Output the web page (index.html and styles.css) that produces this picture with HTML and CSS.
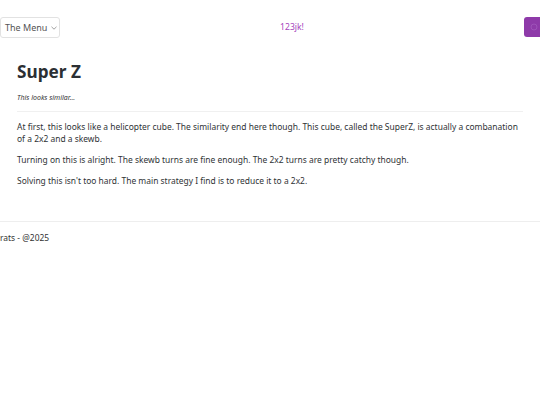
FILE: index.html
```html
<!DOCTYPE html>
<html>
<head>
<meta charset="utf-8">
<link rel="stylesheet" href="styles.css">
</head>
<body>
<header class="topbar">
  <button class="menu-btn">The Menu <svg class="chev" width="6" height="4" viewBox="0 0 6 4"><path d="M0.5 0.8 L3 3.2 L5.5 0.8" fill="none" stroke="#888" stroke-width="0.8"/></svg></button>
  <span class="brand">123jk!</span>
  <span class="user-btn"><svg width="8" height="8" viewBox="0 0 8 8"><circle cx="4" cy="4" r="3" fill="none" stroke="#9d52b8" stroke-width="1"/></svg></span>
</header>
<main class="content">
  <h1 class="title">Super Z</h1>
  <p class="subtitle">This looks similar...</p>
  <hr class="rule">
  <p class="para">At first, this looks like a helicopter cube. The similarity end here though. This cube, called the SuperZ, is actually a combanation of a 2x2 and a skewb.</p>
  <p class="para">Turning on this is alright. The skewb turns are fine enough. The 2x2 turns are pretty catchy though.</p>
  <p class="para">Solving this isn't too hard. The main strategy I find is to reduce it to a 2x2.</p>
</main>
<footer class="footer">rats - @2025</footer>
</body>
</html>
```
FILE: styles.css
```css
html, body { margin: 0; padding: 0; background: #fff; }
body { font-family: "Noto Sans", "Open Sans", sans-serif; color: #2b2f33; width: 540px; overflow: hidden; }
.topbar { display: flex; align-items: center; justify-content: space-between; height: 20px; margin-top: 17px; }
.menu-btn { font-family: inherit; font-size: 9px; color: #555; background: #fff; border: 1px solid #e2e2e2; border-radius: 3px; height: 21px; width: 60px; padding: 0 0 0 4px; display: flex; align-items: center; gap: 4px; }
.chev { margin-top: 1px; }
.brand { font-size: 8.6px; color: #a545bd; margin-left: 0; }
.user-btn { width: 20px; height: 20px; background: #8e3aa9; border-radius: 3px 0 0 3px; margin-right: -4px; display: flex; align-items: center; justify-content: center; }
.content { padding: 0 17px 0 17px; margin-top: 22px; }
.title { font-size: 17.2px; font-weight: 700; margin: 0; line-height: 26px; }
.subtitle { font-size: 7px; font-style: italic; margin: 8px 0 0; line-height: 10px; color: #333; }
.rule { border: 0; border-top: 1px solid #f0f0f0; margin: 8px 0 0; }
.para { font-size: 8.45px; line-height: 12px; margin: 9px 0 0; color: #2f3336; }
.para:first-of-type { margin-top: 10px; }
.footer { border-top: 1px solid #eeeeee; margin-top: 34px; padding-top: 10px; font-size: 8.45px; line-height: 12px; color: #333; }
```
